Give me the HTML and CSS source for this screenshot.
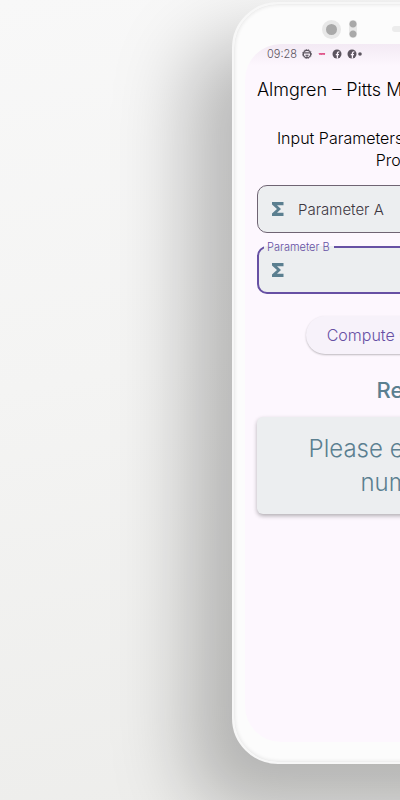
FILE: index.html
```
<!DOCTYPE html>
<html lang="en">
	<head>
		<meta charset="utf-8">
		<meta name="viewport" content="width=device-width, initial-scale=1">
		<title>Almgren – Pitts Model</title>
		<link rel="stylesheet" href="styles.css">
	</head>
	<body>
		<div class="phone">
			<div class="bezel">
				<span class="camera"></span>
				<span class="sensors"></span>
				<span class="speaker"></span>
			</div>
			<div class="screen">
				<div class="status">
					<span class="time">09:28</span>
					<svg width="10" height="10" viewBox="0 0 10 10">
						<circle cx="5" cy="5" r="3.7" fill="none" stroke="#5c555f" stroke-width="1.2"/>
						<circle cx="5" cy="5" r="4.5" fill="none" stroke="#5c555f" stroke-width=".8" stroke-dasharray="1.4 1"/>
						<path d="M1.5 3.9h7M3.4 6.3h3.2M5 6v2.5" stroke="#5c555f" stroke-width="1.1"/>
					</svg>
					<svg width="10" height="10" viewBox="0 0 10 10">
						<path d="M2 5.2c1-.8 1.6 0 2.5-.2s1.500-.4 3.500 0" fill="none" stroke="#e0558a" stroke-width="1.8"/>
					</svg>
					<svg width="10" height="10" viewBox="0 0 10 10">
						<circle cx="5" cy="5" r="4.5" fill="#5c555f"/>
						<path d="M5.4 9.5V4.3c0-1 .6-1.5 1.9-1.4M3.8 5.6h3.2" fill="none" stroke="#fbf3fb" stroke-width="1.3"/>
					</svg>
					<svg width="15" height="10" viewBox="0 0 15 10">
						<circle cx="5" cy="5" r="4.5" fill="#5c555f"/>
						<path d="M5.4 9.5V4.3c0-1 .6-1.5 1.9-1.4M3.8 5.6h3.2" fill="none" stroke="#fbf3fb" stroke-width="1.3"/>
						<circle cx="13" cy="5" r="1.8" fill="#5c555f"/>
					</svg>
				</div>
				<h1 class="title">Almgren – Pitts Model</h1>
				<form class="content">
					<p class="intro">Input Parameters for Calculating your<br>Probability</p>
					<div class="field">
						<svg class="sigma" width="12" height="14" viewBox="0 0 12 14">
							<path d="M0 0h11.5v3.2H5L9 7l-4 3.8h6.5V14H0v-2.4L5 7 0 2.4z" fill="#5b7f90"/>
						</svg>
						<input class="textbox" type="text" name="a" placeholder="Parameter A" aria-label="Parameter A">
					</div>
					<fieldset class="active">
						<legend><label for="paramB">Parameter B</label></legend>
						<div class="row">
							<svg class="sigma" width="12" height="14" viewBox="0 0 12 14">
								<path d="M0 0h11.5v3.2H5L9 7l-4 3.8h6.5V14H0v-2.4L5 7 0 2.4z" fill="#5b7f90"/>
							</svg>
							<input id="paramB" class="textbox" type="text" name="b">
						</div>
					</fieldset>
					<button class="compute" type="button">Compute Output Values</button>
					<h2 class="heading">Results</h2>
					<output class="result">Please enter whole<br>number A</output>
				</form>
			</div>
		</div>
	</body>
</html>
```
FILE: styles.css
```
* {
	box-sizing: border-box;
}
body {
	margin: 0;
	min-height: 100vh;
	display: flex;
	align-items: flex-start;
	padding: 2px 0 36px 232px;
	overflow: hidden;
	background: linear-gradient(170deg, #f8f8f8, #f4f4f3 45%, #ededeb);
	font-family: Inter, "Liberation Sans", sans-serif;
}
.phone {
	flex: none;
	width: 366px;
	min-height: 762px;
	display: flex;
	flex-direction: column;
	padding: 12px 11px 20px;
	border: 2px solid #f7f7f7;
	border-radius: 46px;
	background-color: #fcfcfc;
	box-shadow: -40px 42px 76px 3px rgba(0, 0, 0, 0.25), inset 0 0 4px #ddd;
}
.bezel {
	height: 28px;
	display: flex;
	align-items: center;
	padding: 0 0 2px 77px;
}
.camera {
	width: 19px;
	height: 19px;
	border: 4px solid #e8e8e8;
	border-radius: 50%;
	background-color: #a9a9a9;
}
.sensors {
	width: 8px;
	height: 18px;
	margin-left: 8px;
	border-radius: 4px;
	background: radial-gradient(circle at 4px 4px, #a9a9a9 3px, transparent 4px), radial-gradient(circle at 4px 14px, #a9a9a9 3px, #e8e8e8 4px);
}
.speaker {
	width: 46px;
	height: 6px;
	margin-left: 35px;
	border-radius: 3px;
	background-color: #ececec;
}
.screen {
	flex: 1;
	border-radius: 36px;
	background: linear-gradient(#f3eaf4, #fdf7fe 22px);
}
.status {
	height: 20px;
	display: flex;
	align-items: center;
	gap: 5px;
	padding-left: 22px;
}
.time {
	width: 30px;
	font-size: 11px;
	font-weight: 300;
	color: #5c555f;
}
.title {
	margin: 0;
	padding: 12px 12px 10px;
	font-size: 18px;
	line-height: 28px;
	font-weight: 300;
	color: #000;
}
.content {
	display: flex;
	flex-direction: column;
	padding: 13px 12px;
}
.intro {
	margin: 0 0 14px;
	font-size: 16px;
	line-height: 22px;
	font-weight: 300;
	text-align: center;
	color: #000;
}
.field {
	height: 48px;
	display: flex;
	align-items: center;
	padding: 0 14px;
	border: 1px solid #6f6473;
	border-radius: 10px;
	background-color: #eceef0;
}
.sigma {
	flex: none;
}
.textbox {
	flex: 1;
	min-width: 0;
	margin-left: 14px;
	padding: 0;
	border: 0;
	outline: 0;
	background: none;
	font: 300 15px Inter, "Liberation Sans", sans-serif;
	color: #3d3741;
}
.textbox::placeholder {
	color: #3d3741;
	opacity: 1;
}
.active {
	min-width: 0;
	margin: 7px 0 0;
	padding: 0 13px;
	border: 2px solid #6750a4;
	border-radius: 10px;
	background-color: #eceef0;
}
.active legend {
	margin-left: -8px;
	padding: 0 4px 0 3px;
	font-size: 11px;
	line-height: 14px;
	font-weight: 300;
	color: #6750a4;
}
.row {
	height: 38px;
	display: flex;
	align-items: center;
	padding-bottom: 6px;
}
.compute {
	align-self: center;
	height: 38px;
	margin-top: 22px;
	padding: 0 21px;
	border: 0;
	border-radius: 19px;
	background-color: #f7f2fa;
	box-shadow: 0 1px 2px rgba(0, 0, 0, 0.25);
	font: 300 16px Inter, "Liberation Sans", sans-serif;
	color: #6750a4;
}
.heading {
	margin: 20px 0 11px;
	font-size: 22px;
	line-height: 32px;
	font-weight: 500;
	text-align: center;
	color: #5b7f90;
}
.result {
	padding: 15px 12px 14px;
	border-radius: 6px;
	background-color: #eceef0;
	box-shadow: 0 2px 4px rgba(0, 0, 0, 0.3);
	font-size: 24px;
	line-height: 34px;
	font-weight: 300;
	text-align: center;
	color: #5b7f90;
}
```
